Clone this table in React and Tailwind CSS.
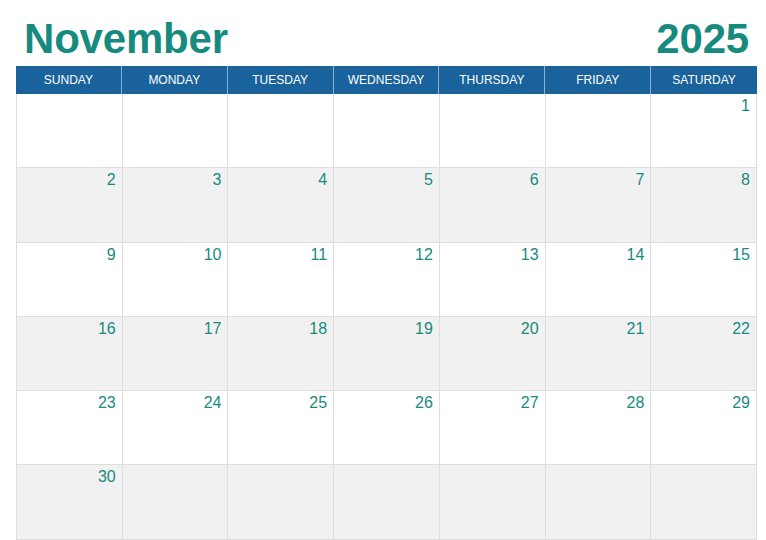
export default function App() {
  const days = ["SUNDAY", "MONDAY", "TUESDAY", "WEDNESDAY", "THURSDAY", "FRIDAY", "SATURDAY"];
  const cells = [];
  for (let i = 0; i < 6; i++) cells.push(null);
  for (let d = 1; d <= 30; d++) cells.push(d);
  while (cells.length < 42) cells.push(null);
  const rows = [];
  for (let r = 0; r < 6; r++) rows.push(cells.slice(r * 7, r * 7 + 7));
  return (
    <div className="w-[766px] h-[540px] bg-white overflow-hidden" style={{ fontFamily: '"Liberation Sans", Arial, sans-serif' }}>
      <div className="ml-4 w-[741px] pt-[18px]">
        <div className="flex justify-between items-start px-2 h-[42px] text-[42px] leading-none font-bold text-[#178a80] tracking-[-0.2px]">
          <span>November</span>
          <span>2025</span>
        </div>
        <div className="mt-[6px] grid grid-cols-7 h-[28px] bg-[#19629b]">
          {days.map((d, i) => (
            <div key={d} className={`flex items-center justify-center text-white text-[12px] ${i < 6 ? "border-r border-[#8fb0cc]" : ""}`}>
              {d}
            </div>
          ))}
        </div>
        <div className="border-l border-[#dedede]">
          {rows.map((row, r) => (
            <div key={r} className={`grid grid-cols-7 h-[74.3px] ${r % 2 === 1 ? "bg-[#f1f1f1]" : "bg-white"}`}>
              {row.map((c, i) => (
                <div key={i} className="border-r border-b border-[#dedede] flex justify-end items-start pr-[6px] pt-[3px] text-[16px] leading-[18px] text-[#178a80]">
                  {c}
                </div>
              ))}
            </div>
          ))}
        </div>
      </div>
    </div>
  );
}
